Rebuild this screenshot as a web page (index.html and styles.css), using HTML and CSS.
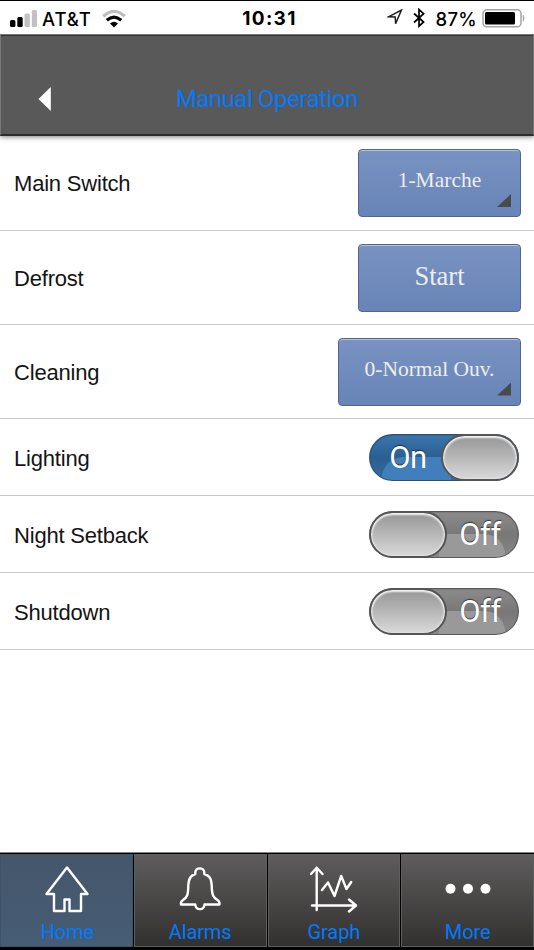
FILE: index.html
```
<!DOCTYPE html>
<html lang="en">

<head>
    <meta charset="UTF-8" />
    <meta name="viewport" content="width=device-width, initial-scale=1.0" />
    <title>Manual Operation</title>
    <link rel="stylesheet" href="styles.css">
</head>

<body>
    <div class="status-bar">
        <div class="status-left">
            <svg class="signal" width="27" height="17" aria-hidden="true">
                <rect x="0" y="10" width="5.4" height="7" rx="1.5" />
                <rect x="7.3" y="7" width="5.4" height="10" rx="1.5" />
                <rect x="14.5" y="3.5" width="5.4" height="13.5" rx="1.5" fill="#c2c2c2" />
                <rect x="21.8" y="0" width="5.2" height="17" rx="1.5" fill="#c2c2c2" />
            </svg>
            <span class="carrier">AT&amp;T</span>
            <svg class="wifi" width="24" height="18" viewBox="0 0 24 18" fill="none" aria-hidden="true">
                <path d="M1.3 6.2Q12-3.3 22.7 6.2" stroke="#bdbdbd" stroke-width="3.2" />
                <path d="M4.8 10.2Q12 4 19.2 10.2" stroke="#000" stroke-width="3.2" />
                <path d="M8 13.4Q12 10.2 16 13.4L12 17.4Z" fill="#000" />
            </svg>
        </div>
        <span class="clock">10:31</span>
        <div class="status-right">
            <svg class="location" width="16" height="17" viewBox="0 0 16 17" fill="none" stroke="#222" stroke-width="1.5" aria-hidden="true">
                <path d="M1.5 7.8L14.5 1L8.6 14.6L8.2 8Z" />
            </svg>
            <svg class="bluetooth" width="12" height="20" viewBox="0 0 12 20" fill="none" stroke="#000" stroke-width="1.7" aria-hidden="true">
                <path d="M1 5.5L10.6 14L6 18.2V1.5L10.6 5.7L1 14.5" />
            </svg>
            <span class="percent">87%</span>
            <svg class="battery" width="44" height="20" viewBox="0 0 44 20" aria-hidden="true">
                <rect x="1" y="0.8" width="38" height="17" rx="3.8" fill="none" stroke="#a5a5a5" stroke-width="1.5" />
                <rect x="3" y="3" width="30" height="12.4" rx="1.5" />
                <path d="M41 6Q43.4 9.1 41 12.4Z" fill="#a5a5a5" stroke="#a5a5a5" stroke-width="0.5" />
            </svg>
        </div>
    </div>

    <header class="header">
        <button type="button" class="back" aria-label="Back">
            <svg width="13" height="24" aria-hidden="true">
                <path d="M0.5 12L12.8 0V24Z" fill="#fff" />
            </svg>
        </button>
        <h1 class="title">Manual Operation</h1>
    </header>

    <main>
        <ul class="list">
            <li class="row row-first">
                <span class="label">Main Switch</span>
                <button type="button" class="select">1-Marche</button>
            </li>
            <li class="row">
                <span class="label">Defrost</span>
                <button type="button" class="action">Start</button>
            </li>
            <li class="row">
                <span class="label">Cleaning</span>
                <button type="button" class="select select-wide">0-Normal Ouv.</button>
            </li>
            <li class="row row-toggle">
                <span class="label">Lighting</span>
                <button type="button" class="toggle toggle-on" role="switch" aria-checked="true" aria-label="Lighting">
                    <span class="toggle-text">On</span>
                    <span class="knob"></span>
                </button>
            </li>
            <li class="row row-toggle">
                <span class="label">Night Setback</span>
                <button type="button" class="toggle" role="switch" aria-checked="false" aria-label="Night Setback">
                    <span class="knob"></span>
                    <span class="toggle-text">Off</span>
                </button>
            </li>
            <li class="row row-toggle">
                <span class="label">Shutdown</span>
                <button type="button" class="toggle" role="switch" aria-checked="false" aria-label="Shutdown">
                    <span class="knob"></span>
                    <span class="toggle-text">Off</span>
                </button>
            </li>
        </ul>
    </main>

    <nav class="tabs">
        <a class="tab" href="#home" aria-current="page">
            <svg width="48" height="48" viewBox="0 0 48 48" aria-hidden="true">
                <path d="M24 1.5L44.5 28H38V45H26.5V33.5H21.5V45H11V28H3.5Z" />
            </svg>
            <span>Home</span>
        </a>
        <a class="tab" href="#alarms">
            <svg width="48" height="48" viewBox="0 0 48 48" aria-hidden="true">
                <path d="M19.3 8V6.5C19.3 1 28.3 1 28.3 6.5V8C33.5 9.3 35.6 13.5 35.7 19C35.8 29.5 37.3 31.3 41.5 34C43.8 35.5 43.6 36.5 43.5 38.5H28.5C28 44.7 19.8 44.7 19.3 38.5H5C4.6 36.5 4.6 35.5 7 34C11.2 31.3 12.2 29 12.3 19C12.5 13.5 14.3 9.3 19.3 8Z" />
            </svg>
            <span>Alarms</span>
        </a>
        <a class="tab" href="#graph">
            <svg width="48" height="48" viewBox="0 0 48 48" aria-hidden="true">
                <path d="M6.7 44V1.8M1 8L6.7 1.8L12.5 8M2 39.5H45.5M39 33.5L46 39.5L39 45.5M12 24L18 16.5L24.5 30L31.2 10L36.5 23L41.2 16" />
            </svg>
            <span>Graph</span>
        </a>
        <a class="tab" href="#more">
            <svg width="48" height="48" viewBox="0 0 48 48" aria-hidden="true">
                <g fill="#fff" stroke="none">
                    <circle cx="6.5" cy="22.7" r="5" />
                    <circle cx="24" cy="22.7" r="5" />
                    <circle cx="41.5" cy="22.7" r="5" />
                </g>
            </svg>
            <span>More</span>
        </a>
    </nav>
</body>

</html>
```
FILE: styles.css
```
/* Define variables for your colors */
:root {
    --color-link: rgb(0, 122, 255);
    --color-header: rgb(89, 89, 89);
    --color-line: rgb(200, 200, 200);
    --color-button-top: rgb(120, 147, 193);
    --color-button-bottom: rgb(104, 132, 184);
}

* {
    box-sizing: border-box;
}

body {
    background: white;
    color: rgb(20, 20, 20);
    display: flex;
    flex-direction: column;
    font-family: "Liberation Sans", Arial, sans-serif;
    font-size: 22px;
    height: 950px;
    margin: 0;
}

button {
    border: 0;
    font-family: inherit;
    padding: 0;
}

/* Status bar */
.status-bar {
    align-items: center;
    border-top: 1px solid black;
    color: black;
    display: grid;
    font-family: Inter, sans-serif;
    font-size: 18.5px;
    grid-template-columns: 1fr auto 1fr;
    height: 34px;
    padding: 2px 8px 0 10px;
}

.status-left,
.status-right {
    align-items: center;
    display: flex;
}

.status-right {
    justify-content: flex-end;
}

.carrier {
    font-weight: 500;
    letter-spacing: 0.9px;
    margin: 0 10px 0 5px;
}

.clock {
    font-size: 19px;
    font-weight: 700;
    letter-spacing: 1.3px;
    padding-left: 3px;
}

.location {
    margin-top: -2px;
}

.bluetooth {
    margin: -1px 11px 0 10px;
}

.percent {
    font-weight: 500;
    letter-spacing: 0.3px;
    margin-right: 5px;
}

/* Header */
.header {
    align-items: center;
    background: var(--color-header);
    border: 1px solid rgb(120, 120, 120);
    border-bottom: 2px solid rgb(45, 45, 45);
    box-shadow: 0 1px 5px rgb(0 0 0 / 0.5), inset 0 1px rgb(50 50 50);
    clip-path: inset(0 0 -8px);
    display: grid;
    grid-template-columns: 1fr auto 1fr;
    height: 102px;
    padding: 29px 37px 0;
}

.back {
    background: none;
    display: flex;
    justify-self: start;
}

.title {
    color: var(--color-link);
    font-family: Roboto, sans-serif;
    font-size: 24px;
    font-weight: 400;
    letter-spacing: -0.45px;
    margin: 0;
}

/* List of settings */
main {
    flex: 1;
}

.list {
    list-style: none;
    margin: 0;
    padding: 0;
}

.row {
    align-items: center;
    border-bottom: 1px solid var(--color-line);
    display: flex;
    height: 94px;
    justify-content: space-between;
    padding: 0 13px 0 14px;
}

.row-first {
    height: 95px;
}

.row-toggle {
    height: 77px;
    padding-right: 15px;
}

.label {
    letter-spacing: -0.2px;
    padding-top: 2px;
}

.row-toggle .label {
    padding-top: 4px;
}

/* Buttons */
.select,
.action {
    background: linear-gradient(var(--color-button-top), var(--color-button-bottom));
    border: 1px solid rgb(82, 101, 138);
    border-radius: 4px;
    box-shadow: inset 0 1px rgb(180 195 215);
    color: rgb(238, 238, 238);
    font-family: "Liberation Serif", "Times New Roman", serif;
    font-size: 21.5px;
    height: 68px;
    position: relative;
    width: 163px;
}

.action {
    font-size: 26.5px;
    padding-bottom: 3px;
}

.select {
    padding-bottom: 5px;
}

.select-wide {
    width: 183px;
}

/* Corner mark for buttons that open a menu */
.select::after {
    background: rgb(74, 74, 74);
    bottom: 9px;
    clip-path: polygon(100% 0, 100% 100%, 0 100%);
    content: "";
    height: 13px;
    position: absolute;
    right: 9px;
    width: 14px;
}

/* Toggles */
.toggle {
    background:
        radial-gradient(ellipse 20px 24px at 117px 47px, rgb(153 153 153) 96%, transparent) no-repeat 0 0 / 100% 100%,
        linear-gradient(rgb(153 153 153), rgb(153 153 153)) no-repeat 70px 23px / 47px 24px,
        linear-gradient(rgb(140, 140, 140), rgb(120, 120, 120) 50%, rgb(135, 135, 135));
    border-radius: 24px;
    box-shadow: inset 0 0 0 1px rgb(90 90 90), inset 0 1px 2px rgb(0 0 0 / 0.4);
    display: flex;
    height: 47px;
    overflow: hidden;
    width: 150px;
}

.toggle-on {
    background:
        radial-gradient(ellipse 20px 24px at 32px 47px, rgb(64 127 187) 96%, transparent) no-repeat 0 0 / 100% 100%,
        linear-gradient(rgb(64 127 187), rgb(64 127 187)) no-repeat 32px 23px / 50px 24px,
        linear-gradient(rgb(59, 119, 174), rgb(43, 95, 145) 50%, rgb(54, 107, 157));
    box-shadow: inset 0 0 0 1px rgb(50 80 110), inset 0 1px 2px rgb(0 0 0 / 0.4);
}

.toggle-text {
    color: white;
    flex: 1;
    font-family: Roboto, sans-serif;
    font-size: 31px;
    font-weight: 400;
    letter-spacing: -0.5px;
    line-height: 48px;
    padding-right: 6px;
    text-align: center;
    text-shadow: 0 -1px 1px rgb(0 0 0 / 0.6);
}

.toggle-on .toggle-text {
    padding: 0 0 0 6px;
}

.knob {
    background: linear-gradient(rgb(150, 150, 150), rgb(217, 217, 217));
    border: 2px solid rgb(85, 85, 85);
    border-radius: 24px;
    box-shadow: inset 0 1px 2px 1px rgb(255 255 255 / 0.9);
    width: 78px;
}

/* Bottom tabs */
.tabs {
    background: black;
    border-bottom: 3px solid black;
    border-top: 1px solid rgb(130, 130, 130);
    display: grid;
    gap: 1px;
    grid-template-columns: repeat(4, 1fr);
    height: 98px;
    padding-top: 1px;
}

.tab {
    align-items: center;
    background: linear-gradient(rgb(94, 92, 92), rgb(51, 49, 48));
    border: 1px solid rgb(95, 94, 94);
    color: var(--color-link);
    display: flex;
    flex-direction: column;
    font-family: Roboto, sans-serif;
    font-size: 20px;
    letter-spacing: -0.1px;
    line-height: 24px;
    padding-top: 11px;
    text-decoration: none;
}

.tab svg {
    fill: none;
    margin-bottom: 6px;
    stroke: white;
    stroke-linecap: round;
    stroke-linejoin: round;
    stroke-width: 2.4;
}

/* Change the background of the active tab */
[aria-current="page"] {
    background: linear-gradient(rgb(69, 86, 107), rgb(70, 93, 117));
    border-color: rgb(62, 83, 106);
    padding-left: 2px;
}
```
